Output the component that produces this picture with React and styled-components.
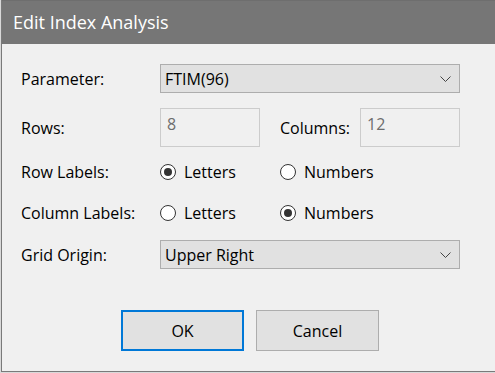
import React from "react";
import styled, { createGlobalStyle } from "styled-components";

const GlobalStyle = createGlobalStyle`
  html, body {
    margin: 0;
    padding: 0;
    background: #d9d9d9;
  }
  body {
    font-family: "Open Sans", "Noto Sans", sans-serif;
  }
`;

const Window = styled.div`
  width: 494px;
  height: 372px;
  margin-left: 1px;
  border-left: 1px solid #7a7a7a;
  border-bottom: 1px solid #7a7a7a;
  background: #f0f0f0;
  box-sizing: border-box;
  display: flex;
  flex-direction: column;
`;

const TitleBar = styled.div`
  height: 44px;
  flex-shrink: 0;
  background: #767676;
  border-top: 1px solid #6e6e6e;
  box-sizing: border-box;
  display: flex;
  align-items: center;
  padding-left: 11px;
  padding-bottom: 1px;
  color: #ffffff;
  font-size: 18px;
`;

const Body = styled.div`
  padding: 20px 0 0 19px;
  display: flex;
  flex-direction: column;
  font-size: 16px;
  color: #000;
`;

const Row = styled.div`
  display: flex;
  align-items: center;
  height: ${(p) => p.h}px;
  margin-bottom: ${(p) => p.mb || 0}px;
`;

const Label = styled.div`
  width: ${(p) => p.w || 139}px;
  padding-left: ${(p) => p.indent || 0}px;
  box-sizing: border-box;
  flex-shrink: 0;
  white-space: nowrap;
`;

const Select = styled.div`
  width: 300px;
  height: 29px;
  box-sizing: border-box;
  border: 1px solid #adadad;
  background: #e1e1e1;
  display: flex;
  align-items: center;
  justify-content: space-between;
  padding: 0 8px 0 4px;
`;

const TextBox = styled.div`
  width: 100px;
  height: 39px;
  box-sizing: border-box;
  border: 1px solid #cccccc;
  background: #f0f0f0;
  color: #6d6d6d;
  padding: 4px 0 0 6px;
  line-height: 22px;
`;

const Radio = styled.div`
  width: 120px;
  display: flex;
  align-items: center;
  gap: 8px;
`;

const Circle = styled.span`
  width: 16px;
  height: 16px;
  box-sizing: border-box;
  border: 1px solid #333333;
  border-radius: 50%;
  background: #ffffff;
  display: flex;
  align-items: center;
  justify-content: center;
  &::after {
    content: "";
    display: ${(p) => (p.checked ? "block" : "none")};
    width: 8px;
    height: 8px;
    border-radius: 50%;
    background: #333333;
  }
`;

const Buttons = styled.div`
  display: flex;
  gap: 12px;
  margin-top: 41px;
  padding-left: 100px;
`;

const Button = styled.div`
  width: 123px;
  height: 41px;
  box-sizing: border-box;
  border: ${(p) => (p.primary ? "2px solid #0078d7" : "1px solid #adadad")};
  background: #e1e1e1;
  display: flex;
  align-items: center;
  justify-content: center;
`;

const Chevron = () => (
  <svg width="11" height="6" viewBox="0 0 11 6">
    <path d="M0.5 0.5 L5.5 5.5 L10.5 0.5" fill="none" stroke="#444" strokeWidth="1" />
  </svg>
);

export default function App() {
  return (
    <>
      <GlobalStyle />
      <Window>
        <TitleBar>Edit Index Analysis</TitleBar>
        <Body>
          <Row h={29} mb={15}>
            <Label>Parameter:</Label>
            <Select>
              <span>FTIM(96)</span>
              <Chevron />
            </Select>
          </Row>
          <Row h={39} mb={13}>
            <Label>Rows:</Label>
            <TextBox>8</TextBox>
            <Label w={100} indent={20}>
              Columns:
            </Label>
            <TextBox>12</TextBox>
          </Row>
          <Row h={24} mb={17}>
            <Label>Row Labels:</Label>
            <Radio>
              <Circle checked />
              Letters
            </Radio>
            <Radio>
              <Circle />
              Numbers
            </Radio>
          </Row>
          <Row h={24} mb={15}>
            <Label>Column Labels:</Label>
            <Radio>
              <Circle />
              Letters
            </Radio>
            <Radio>
              <Circle checked />
              Numbers
            </Radio>
          </Row>
          <Row h={29}>
            <Label>Grid Origin:</Label>
            <Select>
              <span>Upper Right</span>
              <Chevron />
            </Select>
          </Row>
          <Buttons>
            <Button primary>OK</Button>
            <Button>Cancel</Button>
          </Buttons>
        </Body>
      </Window>
    </>
  );
}
